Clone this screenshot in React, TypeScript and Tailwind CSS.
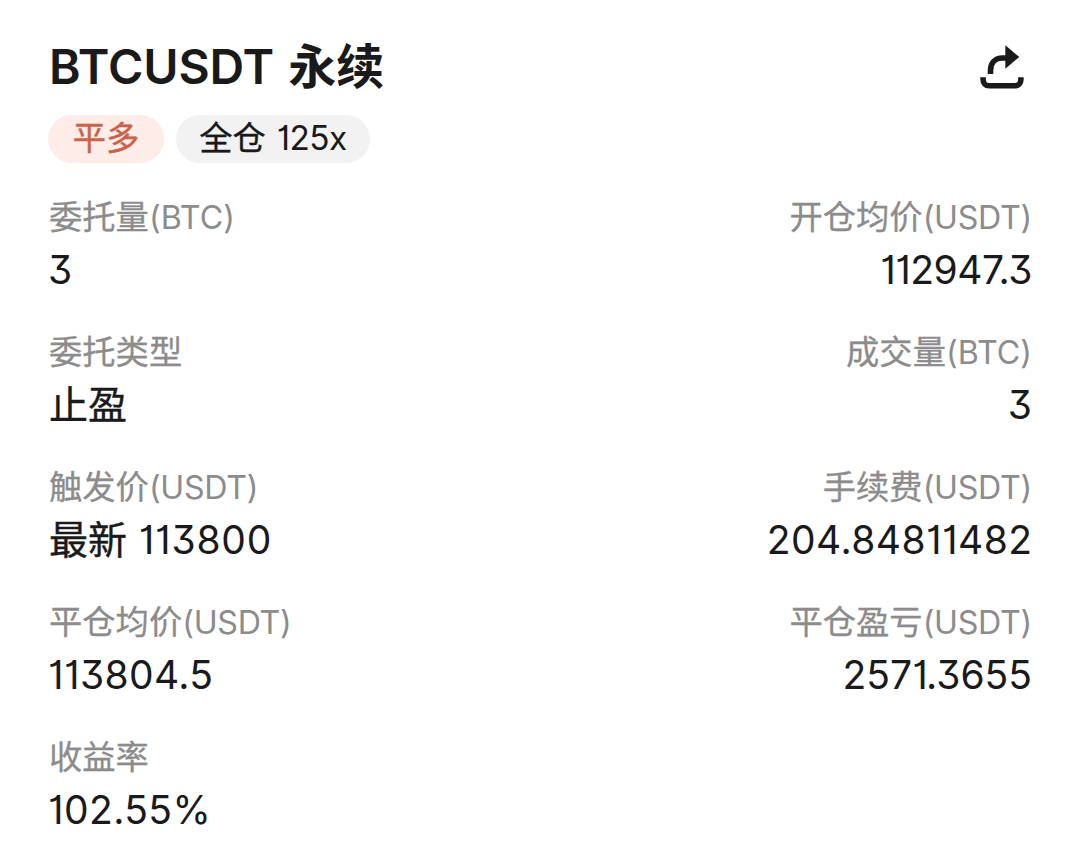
import { clsx } from "clsx";

type Part = { cjk?: string; latin?: string; tracking?: string };
type Field = { label: Part; value: Part };

const leftFields: Field[] = [
  { label: { cjk: "委托量", latin: "(BTC)" }, value: { latin: "3", tracking: "-ml-px" } },
  { label: { cjk: "委托类型" }, value: { cjk: "止盈" } },
  {
    label: { cjk: "触发价", latin: "(USDT)", tracking: "tracking-[-0.3px]" },
    value: { cjk: "最新", latin: " 113800", tracking: "tracking-[0.8px]" }
  },
  {
    label: { cjk: "平仓均价", latin: "(USDT)", tracking: "tracking-[-0.3px]" },
    value: { latin: "113804.5", tracking: "-ml-px tracking-[0.4px]" }
  },
  { label: { cjk: "收益率" }, value: { latin: "102.55%", tracking: "-ml-px tracking-[0.4px]" } }
];

const rightFields: Field[] = [
  {
    label: { cjk: "开仓均价", latin: "(USDT)", tracking: "tracking-[-0.3px]" },
    value: { latin: "112947.3", tracking: "tracking-[-0.5px]" }
  },
  { label: { cjk: "成交量", latin: "(BTC)" }, value: { latin: "3" } },
  {
    label: { cjk: "手续费", latin: "(USDT)", tracking: "tracking-[-0.3px]" },
    value: { latin: "204.84811482", tracking: "-mr-[0.5px] tracking-[0.45px]" }
  },
  {
    label: { cjk: "平仓盈亏", latin: "(USDT)", tracking: "tracking-[-0.3px]" },
    value: { latin: "2571.3655" }
  }
];

function FieldColumn({ fields, align }: { fields: Field[]; align: "left" | "right" }) {
  return (
    <div className={clsx("flex flex-col gap-[31px]", align === "right" && "items-end text-right")}>
      {fields.map(({ label, value }) => (
        <div key={label.cjk}>
          <div className="h-[47px] text-[33.3px] leading-[45px] text-[#8c8c8c]">
            <span className="[-webkit-text-stroke:0.3px_#8c8c8c]">{label.cjk}</span>
            {label.latin && <span className={clsx("text-[32.2px]", label.tracking)}>{label.latin}</span>}
          </div>
          <div className="h-[57px] text-[39px] leading-[55px] text-[#1a1a1a]">
            {value.cjk && <span className="[-webkit-text-stroke:0.4px_#1a1a1a]">{value.cjk}</span>}
            {value.latin && <span className={clsx("whitespace-pre", value.tracking)}>{value.latin}</span>}
          </div>
        </div>
      ))}
    </div>
  );
}

function ShareIcon() {
  return (
    <svg width="44" height="44" viewBox="0 0 44 44" fill="none" className="mt-[45px]">
      <path d="M10.5 29V25.5C10.5 18 15 13 22.5 13H27" stroke="#1a1a1a" strokeWidth="5.6" />
      <path d="M25.3 0.3L39.3 12L25.3 23.7Z" fill="#1a1a1a" />
      <path d="M3.1 32.3V34.5C3.1 38.5 5.5 40.8 9 40.8H35C38.5 40.8 40.9 38.5 40.9 34.5V32.3" stroke="#1a1a1a" strokeWidth="5.6" />
    </svg>
  );
}

export default function App() {
  return (
    <div className="h-[861px] w-[1080px] overflow-hidden bg-white pl-[49px] pr-[48px] font-['Inter','Noto_Sans_CJK_SC',sans-serif] [font-feature-settings:'cv01','cv09','calt'_0]">
      <header className="flex h-[115px] items-start justify-between pr-[8px]">
        <h1 className="mt-[37px] whitespace-pre text-[48px] font-semibold leading-[60px] text-[#1a1a1a]">
          <span className="tracking-[-0.1px]">BTCUSDT </span>
          <span className="ml-[2px]">永续</span>
        </h1>
        <ShareIcon />
      </header>

      <div className="-ml-px flex gap-3 text-[33.3px] leading-[47px]">
        <span className="h-12 w-[116px] rounded-full bg-[#fdece8] text-center text-[#c9644a] [-webkit-text-stroke:0.4px_#c9644a]">
          平多
        </span>
        <span className="h-12 w-[194px] rounded-full bg-[#f2f2f2] text-center text-[#1a1a1a]">
          <span className="[-webkit-text-stroke:0.3px_#1a1a1a]">全仓</span>
          <span className="ml-[2px] tracking-[-0.5px]"> 125x</span>
        </span>
      </div>

      <main className="mt-8 flex justify-between">
        <FieldColumn fields={leftFields} align="left" />
        <FieldColumn fields={rightFields} align="right" />
      </main>
    </div>
  );
}
